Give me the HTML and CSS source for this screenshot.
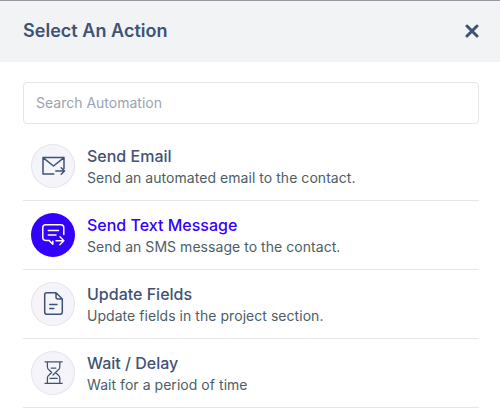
FILE: index.html
```html
<!DOCTYPE html>
<html lang="en">
<head>
<meta charset="utf-8">
<title>Select An Action</title>
<link rel="stylesheet" href="styles.css">
</head>
<body>
<div class="modal">
  <header class="header">
    <h1 class="title">Select An Action</h1>
    <button class="close" aria-label="Close"><svg width="14" height="14" viewBox="0 0 14 14"><path d="M2 2L12 12M12 2L2 12"/></svg></button>
  </header>
  <main class="content">
    <input class="search" type="text" placeholder="Search Automation">
    <ul class="actions">
      <li class="action">
        <span class="icon"><svg viewBox="0 0 44 44"><path d="M22.8 30H12V13.6H33V24.5M12 13.6L22.5 22L33 13.6M24.8 27H33.5M30.2 23.8L33.5 27L30.2 30.2"/></svg></span>
        <div class="text"><h2 class="name">Send Email</h2><p class="desc">Send an automated email to the contact.</p></div>
      </li>
      <li class="action selected">
        <span class="icon"><svg viewBox="0 0 44 44"><path d="M32.8 21.5V14.5Q32.8 11.7 30 11.7H14.6Q11.8 11.7 11.8 14.5V24.6Q11.8 27.4 14.6 27.4H18L21.8 31.2V28.2M17.3 17.4H27.5M17.3 22H25M25 27.7H32.8M29 23.8L32.8 27.7L29 31.6"/></svg></span>
        <div class="text"><h2 class="name">Send Text Message</h2><p class="desc">Send an SMS message to the contact.</p></div>
      </li>
      <li class="action">
        <span class="icon"><svg viewBox="0 0 44 44"><path d="M25 10.8H15.8Q13.7 10.8 13.7 12.9V30Q13.7 32.2 15.8 32.2H29.2Q31.3 32.2 31.3 30V17ZM25 10.8V15Q25 17 27 17H31.3M18.8 22.4H26M18.8 26.4H22.8"/></svg></span>
        <div class="text"><h2 class="name">Update Fields</h2><p class="desc">Update fields in the project section.</p></div>
      </li>
      <li class="action">
        <span class="icon"><svg class="thin" viewBox="0 0 44 44"><path d="M14 10.8H31.2M14 32.3H31.2M16.4 10.8V16Q16.4 18 18.1 19L20.7 21.5L18.1 24Q16.4 25.1 16.4 27V32.3M28.8 10.8V16Q28.8 18 27.1 19L22 24M24.5 21.5L27.1 24Q28.8 25.1 28.8 27V32.3M20.2 17.2H24.8M19 27.4H26.2"/></svg></span>
        <div class="text"><h2 class="name">Wait / Delay</h2><p class="desc">Wait for a period of time</p></div>
      </li>
    </ul>
  </main>
</div>
</body>
</html>
```

FILE: styles.css
```css
* { box-sizing: border-box; margin: 0; padding: 0; }
body { background: #fff; font-family: Inter, "Liberation Sans", sans-serif; overflow: hidden; }
.header {
  display: flex;
  align-items: center;
  justify-content: space-between;
  height: 62px;
  padding: 0 21px 2px 23px;
  background: #f2f3f5;
  border-top: 1px solid #95969f;
}
.title { font-size: 18px; line-height: 28px; font-weight: 600; letter-spacing: 0.03px; color: #3f5274; }
.close { display: flex; border: 0; background: none; }
.close svg { fill: none; stroke: #3f5274; stroke-width: 3; stroke-linecap: round; }
.content { padding: 20px 21px 0 23px; }
.search {
  display: block;
  width: 100%;
  height: 42px;
  padding: 0 12px 2px;
  border: 1px solid #e4e4eb;
  border-radius: 4px;
  background: #fff;
  font: 14px/20px Inter, "Liberation Sans", sans-serif;
}
.search::placeholder { color: #9ca3af; opacity: 1; }
.actions { list-style: none; padding-top: 8px; }
.action {
  display: flex;
  align-items: center;
  gap: 12px;
  height: 69px;
  padding: 0 8px;
  border-bottom: 1px solid #e5e5ea;
}
.icon {
  flex: none;
  width: 44px;
  height: 44px;
  border-radius: 50%;
  background: #f4f4fa;
  box-shadow: inset 0 0 0 1px #e5e5ec;
  color: #3f5274;
}
.icon svg { display: block; fill: none; stroke: currentColor; stroke-width: 1.5; stroke-linecap: round; stroke-linejoin: round; }
.icon .thin { stroke-width: 1.25; }
.name { font-size: 16px; line-height: 24px; font-weight: 500; color: #3f5274; }
.desc { font-size: 14px; line-height: 20px; letter-spacing: 0.045px; color: #4d5e66; }
.selected .icon { background: #3300ff; box-shadow: none; color: #fff; }
.selected .name { color: #3300ff; }
```
